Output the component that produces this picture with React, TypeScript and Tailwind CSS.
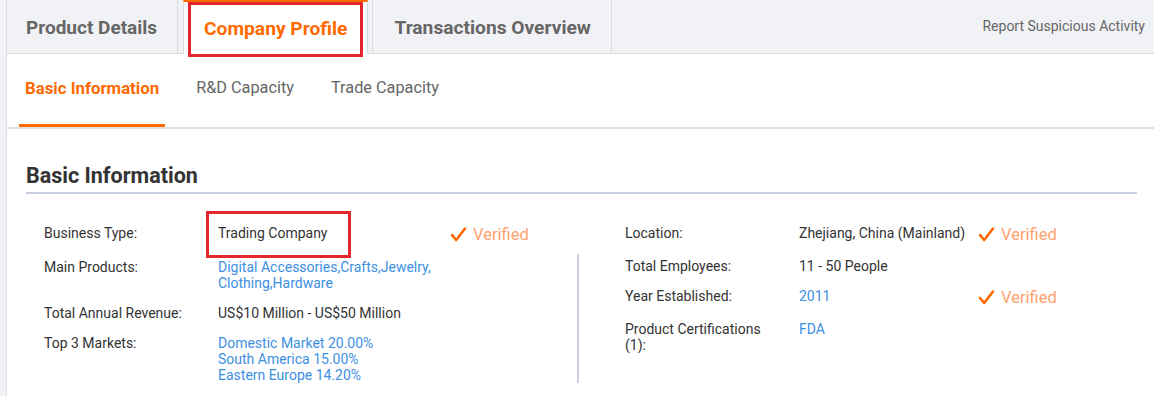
import React from "react";

const leftRows = [
  { label: "Business Type:", value: ["Trading Company"], verified: true, boxed: true },
  { label: "Main Products:", value: ["Digital Accessories,Crafts,Jewelry,", "Clothing,Hardware"], link: true },
  { label: "Total Annual Revenue:", value: ["US$10 Million - US$50 Million"] },
  { label: "Top 3 Markets:", value: ["Domestic Market 20.00%", "South America 15.00%", "Eastern Europe 14.20%"], link: true },
];

const rightRows = [
  { label: "Location:", value: ["Zhejiang, China (Mainland)"], verified: true, mt: "mt-0" },
  { label: "Total Employees:", value: ["11 - 50 People"], mt: "mt-[13px]" },
  { label: "Year Established:", value: ["2011"], link: true, verified: true, mt: "mt-[10px]" },
  { label: "Product Certifications (1):", value: ["FDA"], link: true, mt: "mt-[13px]" },
];

function Verified() {
  return (
    <div className="mt-[3px] flex items-center gap-[6px] text-[16.5px] leading-[24px] text-[#ffa26e]">
      <svg width="17" height="17" viewBox="0 0 17 17" className="shrink-0">
        <path d="M2 9 L6.2 14 L15 2.5" fill="none" stroke="#ff6a00" strokeWidth="2.6" strokeLinecap="round" strokeLinejoin="round" />
      </svg>
      <span>Verified</span>
    </div>
  );
}

function Value({ lines, link }: { lines: string[]; link?: boolean }) {
  return (
    <div className={link ? "text-[#3d8fe2]" : "text-[#333]"}>
      {lines.map((l) => (
        <div key={l}>{l}</div>
      ))}
    </div>
  );
}

export default function App() {
  return (
    <div
      className="flex w-[1154px] h-[396px] overflow-hidden bg-[#f1f2f6] pl-[6px]"
      style={{ fontFamily: "Roboto, 'Liberation Sans', sans-serif" }}
    >
      <div className="flex-1 flex flex-col border-l border-[#dcdfe6] min-w-0">
        {/* Top tabs */}
        <div className="relative flex h-[54px] border-b border-[#dcdcdc] bg-[#f1f2f6]">
          <div className="flex items-center pt-[3px] pl-[19px] pr-[20px] border-r border-[#dcdcdc] text-[19px] font-bold text-[#666]">
            Product Details
          </div>
          <div className="ml-[5px] -mb-px flex items-center pt-[2px] px-[20px] bg-white border-x border-[#dcdcdc] border-t-2 border-t-[#ff6a00] text-[19.2px] font-bold text-[#ff6a00]">
            Company Profile
          </div>
          <div className="ml-[4px] flex items-center pt-[3px] pl-[21px] pr-[20px] border-x border-[#dcdcdc] text-[19.2px] font-bold text-[#666]">
            Transactions Overview
          </div>
          <div className="ml-auto flex items-center pr-[9px] text-[14px] text-[#666]">
            Report Suspicious Activity
          </div>
          <div className="absolute left-[181px] top-[2px] w-[175px] h-[55px] border-[3px] border-[#e3262b]" />
        </div>

        <div className="flex-1 bg-white">
          {/* Sub tabs */}
          <div className="flex h-[75px] gap-[25px] pl-[12px] border-b-2 border-[#e2e2e2] text-[16.3px]">
            <div className="flex items-center px-[6px] pb-[1px] border-b-[3px] border-[#ff6a00] text-[16.8px] font-bold text-[#ff6a00]">
              Basic Information
            </div>
            <div className="flex items-center px-[6px] pb-[4px] text-[#666]">R&amp;D Capacity</div>
            <div className="flex items-center px-[6px] pb-[4px] text-[#666]">Trade Capacity</div>
          </div>

          <div className="pl-[19px] pr-[17px]">
            <h2 className="mt-[34px] pb-[3px] border-b-2 border-[#c9d1e1] text-[21.5px] leading-[26px] font-bold text-[#333]">
              Basic Information
            </h2>

            <div className="mt-[27px] flex text-[14px] leading-[16px] text-[#333]">
              {/* left column */}
              <div className="w-[551px] pl-[18px]">
                {leftRows.map((r, i) => (
                  <div
                    key={r.label}
                    className={`flex ${i === 0 ? "items-center h-[24px]" : "items-start mt-[14px]"} ${i === 1 ? "mt-[13px]" : ""}`}
                  >
                    <div className="w-[174px] pr-[14px] shrink-0">{r.label}</div>
                    <div className="relative w-[232px] shrink-0">
                      <Value lines={r.value} link={r.link} />
                      {r.boxed && (
                        <span className="absolute -left-[12px] -top-[14px] w-[145px] h-[47px] border-[3px] border-[#e3262b]" />
                      )}
                    </div>
                    {r.verified && <Verified />}
                  </div>
                ))}
              </div>

              {/* divider */}
              <div className="w-[2px] mt-[33px] bg-[#c9d1e1] shrink-0" />

              {/* right column */}
              <div className="flex-1 pl-[46px]">
                {rightRows.map((r) => (
                  <div
                    key={r.label}
                    className={`flex ${r.verified ? "items-center h-[24px]" : "items-start"} ${r.mt}`}
                  >
                    <div className="w-[174px] pr-[14px] shrink-0">{r.label}</div>
                    <div className="w-[179px] shrink-0">
                      <Value lines={r.value} link={r.link} />
                    </div>
                    {r.verified && <Verified />}
                  </div>
                ))}
              </div>
            </div>
          </div>
        </div>
      </div>
    </div>
  );
}
